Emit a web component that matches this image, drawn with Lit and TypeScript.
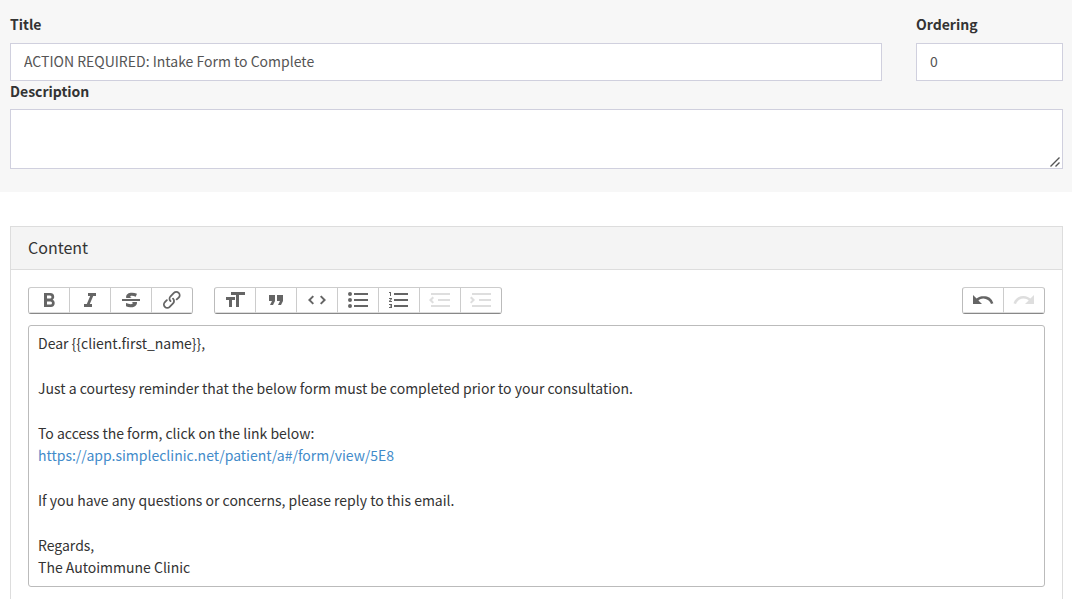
import { LitElement, html, css } from "lit";
import { customElement, property, state } from "lit/decorators.js";

interface Tool {
  name: string;
  path: string;
  disabled?: boolean;
}

const textTools: Tool[] = [
  { name: "Bold", path: "M15.6 11.8c1-.7 1.6-1.8 1.6-2.8a4 4 0 0 0-4-4H7v14h7c2.1 0 3.7-1.7 3.7-3.8 0-1.5-.8-2.8-2.1-3.4zM10 7.5h3a1.5 1.5 0 1 1 0 3h-3v-3zm3.5 9H10v-3h3.5a1.5 1.5 0 1 1 0 3z" },
  { name: "Italic", path: "M10 5v3h2.2l-3.4 8H6v3h8v-3h-2.2l3.4-8H18V5h-8z" },
  { name: "Strikethrough", path: "M12.73 14l.28.14c.26.15.45.3.57.44.12.14.18.3.18.5 0 .3-.15.56-.44.75-.3.2-.76.3-1.39.3A13.52 13.52 0 0 1 7 14.95v3.37a10.64 10.64 0 0 0 4.84.88c1.26 0 2.35-.19 3.28-.56.93-.37 1.64-.9 2.14-1.57s.74-1.45.74-2.32c0-.26-.02-.51-.06-.75h-5.21zm-5.5-4c-.08-.34-.12-.7-.12-1.1 0-1.29.52-2.3 1.58-3.02 1.05-.72 2.5-1.08 4.34-1.08 1.62 0 3.28.34 4.97 1l-1.3 2.93c-1.47-.6-2.73-.9-3.8-.9-.55 0-.96.08-1.2.26-.26.17-.38.38-.38.64 0 .27.16.52.48.74.17.12.53.3 1.05.53H7.23zM3 13h18v-2H3v2z" },
  { name: "Link", path: "M9.88 13.7a4.3 4.3 0 0 1 0-6.07l3.37-3.37a4.26 4.26 0 0 1 6.07 0 4.3 4.3 0 0 1 0 6.06l-1.96 1.72a.91.91 0 1 1-1.3-1.3l1.97-1.71a2.46 2.46 0 0 0-3.48-3.48l-3.38 3.37a2.46 2.46 0 0 0 0 3.48.91.91 0 1 1-1.3 1.3z M4.25 19.46a4.3 4.3 0 0 1 0-6.07l1.93-1.9a.91.91 0 1 1 1.3 1.3l-1.93 1.9a2.46 2.46 0 0 0 3.48 3.48l3.37-3.38c.96-.96.96-2.52 0-3.48a.91.91 0 1 1 1.3-1.3 4.3 4.3 0 0 1 0 6.07l-3.38 3.38a4.26 4.26 0 0 1-6.07 0z" },
];

const blockTools: Tool[] = [
  { name: "Heading", path: "M12 9v3H9v7H6v-7H3V9h9zM8 4h14v3h-6v12h-3V7H8V4z" },
  { name: "Quote", path: "M6 17h3l2-4V7H5v6h3zm8 0h3l2-4V7h-6v6h3z" },
  { name: "Code", path: "M18.2 12L15 15.2l1.4 1.4L21 12l-4.6-4.6L15 8.8l3.2 3.2zM5.8 12L9 8.8 7.6 7.4 3 12l4.6 4.6L9 15.2 5.8 12z" },
  { name: "Bullets", path: "M4 4a2 2 0 1 0 0 4 2 2 0 0 0 0-4zm0 6a2 2 0 1 0 0 4 2 2 0 0 0 0-4zm0 6a2 2 0 1 0 0 4 2 2 0 0 0 0-4zm4 3h14v-2H8v2zm0-6h14v-2H8v2zm0-8v2h14V5H8z" },
  { name: "Numbers", path: "M2 17h2v.5H3v1h1v.5H2v1h3v-4H2v1zm1-9h1V4H2v1h1v3zm-1 3h1.8L2 13.1v.9h3v-1H3.2L5 10.9V10H2v1zm5-6v2h14V5H7zm0 14h14v-2H7v2zm0-6h14v-2H7v2z" },
  { name: "Decrease Level", disabled: true, path: "M3 19h19v-2H3v2zm7-6h12v-2H10v2zm-8.3-.3l2.8 2.9L6 14.2 4 12l2-2-1.4-1.5L1 12l.7.7zM3 5v2h19V5H3z" },
  { name: "Increase Level", disabled: true, path: "M3 19h19v-2H3v2zm7-6h12v-2H10v2zm-6.9-1L1 14.2l1.4 1.4L6 12l-.7-.7-2.8-2.8L1 9.9 3.1 12zM3 5v2h19V5H3z" },
];

const historyTools: Tool[] = [
  { name: "Undo", path: "M12.5 8c-2.6 0-5 1-6.9 2.6L2 7v9h9l-3.6-3.6A8 8 0 0 1 20 16l2.4-.8a10.5 10.5 0 0 0-10-7.2z" },
  { name: "Redo", disabled: true, path: "M18.4 10.6a10.5 10.5 0 0 0-16.9 4.6L4 16a8 8 0 0 1 12.7-3.6L13 16h9V7l-3.6 3.6z" },
];

@customElement("tool-group")
class ToolGroup extends LitElement {
  @property({ attribute: false }) tools: Tool[] = [];

  static styles = css`
    :host {
      display: flex;
      border: 1px solid #bbb;
      border-top-color: #ccc;
      border-bottom-color: #888;
      border-radius: 3px;
      background: #fff;
    }
    .tool {
      display: flex;
      justify-content: center;
      box-sizing: content-box;
      width: 40px;
      height: 24px;
      margin: 0;
      padding: 0;
      border: 0;
      border-bottom: 1px solid #ddd;
      background: transparent;
      color: #000;
      cursor: pointer;
    }
    .tool + .tool {
      border-left: 1px solid #ccc;
    }
    .tool:disabled {
      cursor: default;
    }
    .icon {
      width: 24px;
      height: 24px;
      fill: currentColor;
      opacity: 0.6;
    }
    .tool:disabled .icon {
      opacity: 0.125;
    }
  `;

  render() {
    return this.tools.map(
      (t) => html`<button class="tool" type="button" title=${t.name} aria-label=${t.name} ?disabled=${t.disabled}>
        <svg class="icon" viewBox="0 0 24 24" aria-hidden="true"><path d=${t.path}></path></svg>
      </button>`
    );
  }
}

@customElement("app-root")
class AppRoot extends LitElement {
  @state() private subject = "ACTION REQUIRED: Intake Form to Complete";
  @state() private ordering = 0;

  static styles = css`
    :host {
      display: flex;
      flex-direction: column;
      min-height: 100vh;
      background: #fff;
      color: #333;
      font-family: "Noto Sans CJK JP", "Noto Sans", sans-serif;
      font-size: 14px;
      font-weight: 400;
      line-height: 22px;
    }
    * {
      box-sizing: border-box;
    }
    .details {
      padding: 14px 9px 23px 10px;
      background: #f7f7f7;
    }
    .row {
      display: grid;
      grid-template-columns: 1fr 147px;
      gap: 34px;
    }
    .field {
      display: flex;
      flex-direction: column;
      gap: 8px;
    }
    .row .field {
      gap: 9px;
    }
    .label {
      font-weight: 700;
      line-height: 20px;
    }
    .control {
      width: 100%;
      height: 38px;
      margin: 0;
      padding: 6px 13px 8px;
      border: 1px solid #d0d0de;
      border-radius: 0;
      background: #fff;
      color: #555;
      font: inherit;
      outline: none;
    }
    .area {
      display: block;
      height: 60px;
      resize: vertical;
    }
    .area::-webkit-resizer {
      background: #fff
        url("data:image/svg+xml,%3Csvg xmlns='http://www.w3.org/2000/svg' width='15' height='15' viewBox='0 0 15 15' fill='none' stroke='%23555' stroke-width='1.4'%3E%3Cpath d='M3.5 13.5l9-9M8.5 13.5l4-4'/%3E%3C/svg%3E")
        no-repeat right bottom;
    }
    .panel {
      display: flex;
      flex-direction: column;
      flex: 1;
      margin: 34px 9px 0 10px;
      border: 1px solid #ddd;
      border-bottom: 0;
    }
    .heading {
      margin: 0;
      padding: 9px 17px 11px;
      border-bottom: 1px solid #ddd;
      background: #f4f4f4;
      font-size: 16px;
      font-weight: inherit;
      line-height: 22px;
    }
    .body {
      padding: 17px 17px 12px;
    }
    .toolbar {
      display: flex;
      gap: 21px;
      margin-bottom: 11px;
    }
    .history {
      margin-left: auto;
    }
    .editor {
      display: flex;
      flex-direction: column;
      gap: 23px;
      padding: 6px 9px 8px;
      border: 1px solid #bbb;
      border-radius: 3px;
      outline: none;
    }
    .para {
      margin: 0;
    }
    .link {
      color: #428bca;
      text-decoration: none;
    }
  `;

  render() {
    return html`
      <section class="details">
        <div class="row">
          <div class="field">
            <label class="label" for="title">Title</label>
            <input class="control" id="title" type="text" .value=${this.subject} />
          </div>
          <div class="field">
            <label class="label" for="ordering">Ordering</label>
            <input class="control" id="ordering" type="number" .value=${String(this.ordering)} />
          </div>
        </div>
        <div class="field">
          <label class="label" for="description">Description</label>
          <textarea class="control area" id="description"></textarea>
        </div>
      </section>
      <section class="panel">
        <h2 class="heading" id="content-heading">Content</h2>
        <div class="body">
          <div class="toolbar" role="toolbar" aria-label="Formatting">
            <tool-group .tools=${textTools}></tool-group>
            <tool-group .tools=${blockTools}></tool-group>
            <tool-group class="history" .tools=${historyTools}></tool-group>
          </div>
          <div class="editor" contenteditable="true" role="textbox" aria-multiline="true" aria-labelledby="content-heading" spellcheck="false">
            <p class="para">Dear {{client.first_name}},</p>
            <p class="para">Just a courtesy reminder that the below form must be completed prior to your consultation.</p>
            <p class="para">To access the form, click on the link below:<br /><a class="link" href="https://app.simpleclinic.net/patient/a#/form/view/5E8">https://app.simpleclinic.net/patient/a#/form/view/5E8</a></p>
            <p class="para">If you have any questions or concerns, please reply to this email.</p>
            <p class="para">Regards,<br />The Autoimmune Clinic</p>
          </div>
        </div>
      </section>
    `;
  }
}
